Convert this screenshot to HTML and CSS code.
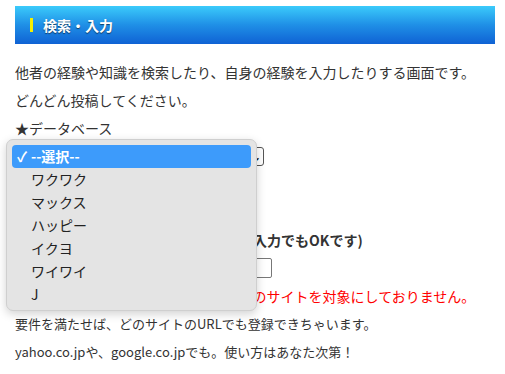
FILE: index.html
```html
<!DOCTYPE html>
<html lang="ja">
<head>
<meta charset="utf-8">
<link rel="stylesheet" href="styles.css">
</head>
<body>
<div class="page">
  <h2 class="heading"><span class="mark"></span>検索・入力</h2>
  <p class="line first">他者の経験や知識を検索したり、自身の経験を入力したりする画面です。</p>
  <p class="line">どんどん投稿してください。</p>
  <p class="line">★データベース</p>
  <div class="field">
    <div class="select"><span class="sel-text">--選択--</span><span class="arrow">⌄</span></div>
  </div>
  <p class="line"></p>
  <p class="line"></p>
  <p class="line bold">★登録するサイトのアドレス（どんな入力でもOKです)</p>
  <div class="field"><div class="input"></div></div>
  <p class="line red">※出会い系・アダルト・ギャンブル等のサイトを対象にしておりません。</p>
  <p class="line small">要件を満たせば、どのサイトのURLでも登録できちゃいます。</p>
  <p class="line small">yahoo.co.jpや、google.co.jpでも。使い方はあなた次第！</p>

  <ul class="popup">
    <li class="opt selected"><span class="check">✓</span>--選択--</li>
    <li class="opt">ワクワク</li>
    <li class="opt">マックス</li>
    <li class="opt">ハッピー</li>
    <li class="opt">イクヨ</li>
    <li class="opt">ワイワイ</li>
    <li class="opt">J</li>
  </ul>
</div>
</body>
</html>
```

FILE: styles.css
```css
html, body {
  margin: 0;
  padding: 0;
  background: #fff;
}
body {
  font-family: "Noto Sans CJK JP", "Noto Sans", sans-serif;
  color: #333;
  font-size: 14px;
}
.page {
  position: relative;
  padding: 6px 10px 0 15px;
}
.heading {
  margin: 0;
  height: 38px;
  display: flex;
  align-items: center;
  background: linear-gradient(to bottom, #3bcbfb 0%, #1f8fe6 50%, #0f62d4 100%);
  color: #fff;
  font-size: 14px;
  font-weight: bold;
  text-shadow: 0 1px 1px rgba(0,0,0,0.55);
  padding-left: 15px;
}
.mark {
  width: 3px;
  height: 14px;
  background: #f5f000;
  margin-right: 10px;
}
.line {
  margin: 0;
  height: 28px;
  line-height: 28px;
  white-space: nowrap;
}
.line.first {
  margin-top: 15px;
  height: 27px;
  line-height: 27px;
}
.line.small {
  font-size: 13px;
}
.bold { font-weight: bold; }
.red { color: #f00; }
.field {
  height: 28px;
  display: flex;
  align-items: center;
}
.select {
  width: 249px;
  height: 19px;
  box-sizing: border-box;
  border: 1px solid #555;
  border-radius: 3px;
  display: flex;
  align-items: center;
  justify-content: space-between;
  padding: 0 2px 0 3px;
  font-size: 12px;
}
.arrow {
  font-size: 12px;
  line-height: 10px;
  font-weight: bold;
  color: #111;
}
.input {
  width: 257px;
  height: 20px;
  box-sizing: border-box;
  border: 1px solid #777;
  border-radius: 2px;
}
.popup {
  position: absolute;
  left: 6px;
  top: 139px;
  width: 251px;
  height: 172px;
  box-sizing: border-box;
  margin: 0;
  padding: 5px 5px;
  list-style: none;
  background: #e4e4e4;
  border: 1px solid #cfcfcf;
  border-radius: 7px;
  box-shadow: 0 3px 10px rgba(0,0,0,0.18);
}
.opt {
  height: 23px;
  line-height: 23px;
  padding-left: 19px;
  font-size: 14px;
  color: #222;
  position: relative;
}
.opt.selected {
  background: #3d9bfb;
  color: #fff;
  border-radius: 4px;
  font-weight: bold;
}
.check {
  position: absolute;
  left: 5px;
  top: 0;
  font-size: 14px;
}
```
